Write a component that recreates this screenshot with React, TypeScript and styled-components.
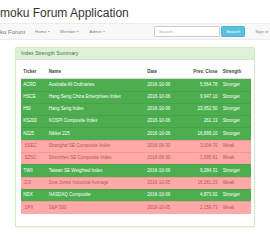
import React from "react";
import styled, { createGlobalStyle } from "styled-components";

interface IndexRow {
    ticker: string;
    name: string;
    date: string;
    close: string;
    strength: "Stronger" | "Weak";
}

const rows: IndexRow[] = [
    { ticker: "ACRD", name: "Australia All Ordinaries", date: "2016-10-06", close: "5,564.78", strength: "Stronger" },
    { ticker: "HSCE", name: "Hang Seng China Enterprises Index", date: "2016-10-06", close: "9,947.10", strength: "Stronger" },
    { ticker: "HSI", name: "Hang Seng Index", date: "2016-10-06", close: "23,952.50", strength: "Stronger" },
    { ticker: "KS200", name: "KOSPI Composite Index", date: "2016-10-06", close: "261.13", strength: "Stronger" },
    { ticker: "N225", name: "Nikkei 225", date: "2016-10-06", close: "16,899.10", strength: "Stronger" },
    { ticker: ".SSEC", name: "Shanghai SE Composite Index", date: "2016-09-30", close: "3,004.70", strength: "Weak" },
    { ticker: ".SZSC", name: "Shenzhen SE Composite Index", date: "2016-09-30", close: "1,995.61", strength: "Weak" },
    { ticker: "TWII", name: "Taiwan SE Weighted Index", date: "2016-10-06", close: "9,284.31", strength: "Stronger" },
    { ticker: ".DJI", name: "Dow Jones Industrial Average", date: "2016-10-05", close: "18,281.03", strength: "Weak" },
    { ticker: "NDX", name: "NASDAQ Composite", date: "2016-10-06", close: "4,873.92", strength: "Stronger" },
    { ticker: ".SPX", name: "S&P 500", date: "2016-10-05", close: "2,159.73", strength: "Weak" },
];

const navItems = ["Home", "Member", "Admin"];

const App: React.FC = () => {
    return (
        <Page>
            <GlobalStyle />
            <Title>moku Forum Application</Title>
            <Navbar>
                <Brand>ku Forum</Brand>
                <NavList>
                    {navItems.map((item) => (
                        <NavLink key={item}>
                            {item}
                            <Caret />
                        </NavLink>
                    ))}
                </NavList>
                <SearchForm>
                    <SearchInput placeholder="Search..." />
                    <SearchButton>Search</SearchButton>
                </SearchForm>
                <SignIn>Sign in</SignIn>
            </Navbar>

            <Panel>
                <PanelHeading>Index Strength Summary</PanelHeading>
                <PanelBody>
                    <Table>
                        <colgroup>
                            <col style={{ width: "25.6px" }} />
                            <col style={{ width: "98.4px" }} />
                            <col style={{ width: "41px" }} />
                            <col style={{ width: "34.6px" }} />
                            <col style={{ width: "30.4px" }} />
                        </colgroup>
                        <thead>
                            <tr>
                                <Th>Ticker</Th>
                                <Th>Name</Th>
                                <Th>Date</Th>
                                <Th $right>Prev. Close</Th>
                                <Th>Strength</Th>
                            </tr>
                        </thead>
                        <tbody>
                            {rows.map((r) => (
                                <Row key={r.ticker} $weak={r.strength === "Weak"}>
                                    <Td>{r.ticker}</Td>
                                    <Td>{r.name}</Td>
                                    <Td>{r.date}</Td>
                                    <Td $right>{r.close}</Td>
                                    <Td>{r.strength}</Td>
                                </Row>
                            ))}
                        </tbody>
                    </Table>
                </PanelBody>
            </Panel>
        </Page>
    );
};

export default App;

const GlobalStyle = createGlobalStyle`
    html, body {
        margin: 0;
        padding: 0;
        background: #fff;
    }
    body {
        font-family: "Liberation Sans", Helvetica, Arial, sans-serif;
        color: #333;
        overflow: hidden;
    }
`;

const Page = styled.div`
    width: 270px;
    height: 250px;
    overflow: hidden;
`;

const Title = styled.h1`
    margin: 6.8px 0 0 0;
    font-size: 12px;
    line-height: 13.2px;
    font-weight: 500;
    color: #333;
    white-space: nowrap;
`;

const Navbar = styled.nav`
    margin-top: 3px;
    height: 17px;
    box-sizing: border-box;
    display: flex;
    align-items: center;
    background: #f8f8f8;
    border-top: 1px solid #ececec;
    border-bottom: 1px solid #ececec;
    white-space: nowrap;
`;

const Brand = styled.span`
    font-size: 6px;
    color: #777;
    width: 30px;
    flex: none;
`;

const NavList = styled.div`
    display: flex;
    align-items: center;
`;

const NavLink = styled.span`
    display: flex;
    align-items: center;
    gap: 1.2px;
    font-size: 4.4px;
    color: #888;
    padding: 0 5px;
`;

const Caret = styled.span`
    width: 0;
    height: 0;
    border-top: 1.3px solid #888;
    border-left: 1.3px solid transparent;
    border-right: 1.3px solid transparent;
`;

const SearchForm = styled.div`
    display: flex;
    align-items: center;
    gap: 1.3px;
    margin-left: 44px;
`;

const SearchInput = styled.input`
    width: 66px;
    height: 11.3px;
    box-sizing: border-box;
    padding: 0 4px;
    font-family: inherit;
    font-size: 4.4px;
    color: #555;
    background: #fff;
    border: 0.5px solid #ccc;
    border-radius: 1.3px;
    outline: none;
    &::placeholder {
        color: #aaa;
    }
`;

const SearchButton = styled.button`
    width: 24px;
    height: 11.3px;
    padding: 0;
    font-family: inherit;
    font-size: 4.4px;
    color: #fff;
    background: #5bc0de;
    border: 0.5px solid #46b8da;
    border-radius: 1.3px;
`;

const SignIn = styled.span`
    margin-left: 10px;
    font-size: 4.4px;
    color: #888;
`;

const Panel = styled.div`
    margin: 6.7px 15px 0;
    width: 240px;
    box-sizing: border-box;
    border: 0.5px solid #d6e9c6;
    border-radius: 1.3px;
    box-shadow: 0 0.5px 1px rgba(0, 0, 0, 0.05);
    background: #fff;
`;

const PanelHeading = styled.div`
    height: 12.3px;
    box-sizing: border-box;
    display: flex;
    align-items: center;
    padding: 0 5px;
    font-size: 5.2px;
    color: #3c763d;
    background: #dff0d8;
    border-bottom: 0.5px solid #d6e9c6;
`;

const PanelBody = styled.div`
    padding: 5px 4.6px;
`;

const Table = styled.table`
    width: 230px;
    table-layout: fixed;
    border-collapse: collapse;
    border-spacing: 0;
    margin-bottom: 6.6px;
    font-size: 4.5px;
    line-height: 6.6px;
`;

const Th = styled.th<{ $right?: boolean }>`
    text-align: ${(p) => (p.$right ? "right" : "left")};
    font-weight: bold;
    color: #444;
    padding: 4px 2.67px 2.67px;
    vertical-align: bottom;
    border-bottom: 0.67px solid #ddd;
    white-space: nowrap;
`;

const Row = styled.tr<{ $weak?: boolean }>`
    height: 12.3px;
    background: ${(p) => (p.$weak ? "#ffa8a8" : "#4cae4f")};
    color: ${(p) => (p.$weak ? "#b05a5a" : "#fff")};
    border-top: 0.5px solid ${(p) => (p.$weak ? "#ec9a9a" : "#46a348")};
`;

const Td = styled.td<{ $right?: boolean }>`
    text-align: ${(p) => (p.$right ? "right" : "left")};
    padding: 0 2.67px;
    vertical-align: middle;
    white-space: nowrap;
    overflow: hidden;
`;
